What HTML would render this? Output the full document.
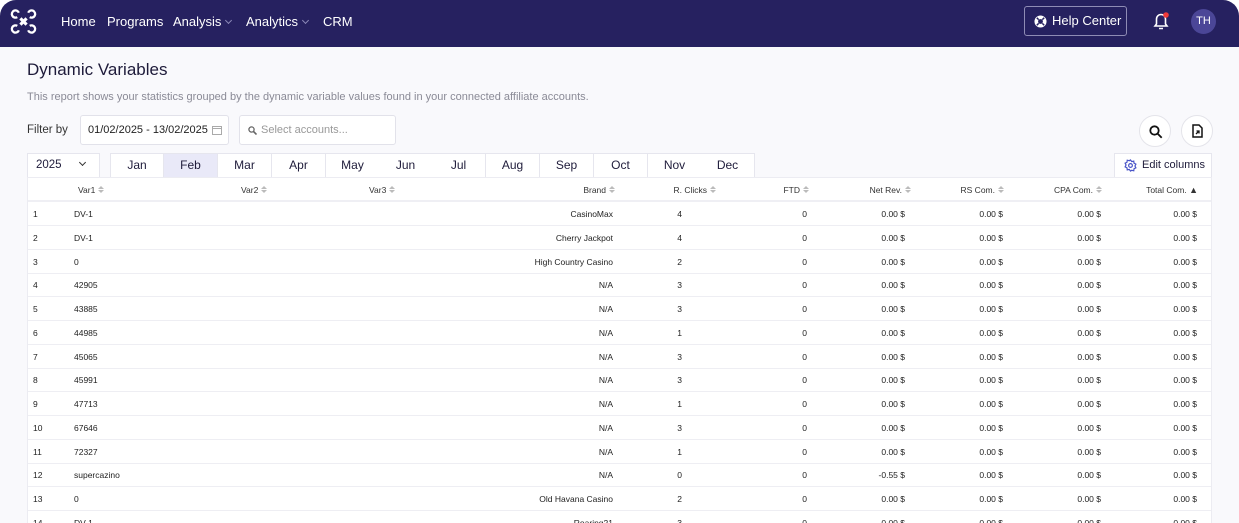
<!DOCTYPE html>
<html><head><meta charset="utf-8"><style>
*{box-sizing:border-box;margin:0;padding:0}
html,body{width:1239px;height:523px;overflow:hidden;background:#fff;font-family:"Liberation Sans",sans-serif;color:#1e1b3a}
.app{position:absolute;left:0;top:0;width:1239px;height:523px;background:#f9f9fc;border-radius:16px 16px 0 0;overflow:hidden}
.nav{position:absolute;left:0;top:0;width:1239px;height:47px;background:#262160}
.nav .l{position:absolute;top:14px;color:#fff;font-size:13px;white-space:nowrap}
.chev{display:inline-block;width:5px;height:5px;border-right:1px solid #8c89b8;border-bottom:1px solid #8c89b8;transform:rotate(45deg);margin-left:5px;position:relative;top:-3px}
.help{position:absolute;left:1024px;top:6px;width:103px;height:30px;border:1px solid #8f8cb5;border-radius:3px;color:#fff;font-size:13px;line-height:28px;padding-left:27px;white-space:nowrap}
.av{position:absolute;left:1191px;top:9px;width:25px;height:25px;border-radius:50%;background:#4b4697;color:#fff;font-size:11px;text-align:center;line-height:25px}
.abs{position:absolute}
.inp{position:absolute;top:115px;height:30px;background:#fff;border:1px solid #e2e2ea;border-radius:3px;font-size:11px;line-height:28px;white-space:nowrap}
.circ{position:absolute;top:115px;width:32px;height:32px;border-radius:50%;border:1px solid #e4e4ea;background:#fff}
.tabs{position:absolute;top:153px;height:25px;background:#fff;border:1px solid #e6e6ee;font-size:12px;white-space:nowrap}
.m{position:absolute;top:153px;height:25px;width:54px;border:1px solid #e6e6ee;border-left:none;background:#fff;font-size:12px;text-align:center;line-height:23px}
.tbl{position:absolute;left:27px;top:177px;width:1185px;height:360px;background:#fff;border:1px solid #ececf2}
.hr{position:absolute;left:0;top:0;width:100%;height:24px;border-bottom:2px solid #efeff4;font-size:8.5px;color:#333}
.r{position:absolute;left:0;width:100%;height:24px;border-bottom:1px solid #eeeef3;font-size:8.5px;color:#222}
.r span,.hr span{position:absolute;top:7px;white-space:nowrap}
.s{display:inline-block;width:6px;height:8px;margin-left:3px;vertical-align:-1px;position:relative}
.s:before{content:"";position:absolute;left:0;top:0;border-left:3px solid transparent;border-right:3px solid transparent;border-bottom:3px solid #bbb}
.s:after{content:"";position:absolute;left:0;top:4px;border-left:3px solid transparent;border-right:3px solid transparent;border-top:3px solid #bbb}
.n{left:5px}.v1{left:46px}
.b{right:598px}.c{right:529px}.f{right:404px}.nr{right:306px}.rs{right:208px}.cp{right:110px}.t{right:14px}
.hr .b{right:596px}.hr .c{right:495px}.hr .f{right:402px}.hr .nr{right:300px}.hr .rs{right:207px}.hr .cp{right:109px}.hr .t{right:13px}
</style></head><body><div class="app">
<div class="nav">
<svg class="abs" style="left:9px;top:7px" width="29" height="29" viewBox="0 0 28 28" fill="none" stroke="#fff" stroke-width="2.2"><path d="M9.5 5.5A3.5 3.5 0 1 0 8 9.8"/><path d="M18.5 5.5A3.5 3.5 0 1 1 20 9.8"/><path d="M9.5 22.5A3.5 3.5 0 1 1 8 18.2"/><path d="M18.5 22.5A3.5 3.5 0 1 0 20 18.2"/><path d="M11 11l6 6M17 11l-6 6" stroke-width="3"/></svg>
<span class="l" style="left:61px">Home</span><span class="l" style="left:107px">Programs</span>
<span class="l" style="left:173px">Analysis<i class="chev"></i></span><span class="l" style="left:246px">Analytics<i class="chev"></i></span><span class="l" style="left:323px">CRM</span>
<div class="help"><svg class="abs" style="left:9px;top:8px" width="13" height="13" viewBox="0 0 14 14"><circle cx="7" cy="7" r="6.5" fill="#fff"/><circle cx="7" cy="7" r="2.6" fill="#262160"/><path d="M3 3l2 2M11 3l-2 2M3 11l2-2M11 11l-2-2" stroke="#262160" stroke-width="1.6"/></svg>Help Center</div>
<svg class="abs" style="left:1152px;top:11px" width="18" height="20" viewBox="0 0 18 20" fill="none" stroke="#fff" stroke-width="1.6"><path d="M3 15h12l-1.5-2V8a4.5 4.5 0 0 0-9 0v5z"/><path d="M7 17.5h4"/><circle cx="14" cy="4" r="2.8" fill="#f03a3a" stroke="none"/></svg>
<div class="av">TH</div>
</div>
<div class="abs" style="left:27px;top:60px;font-size:17px;color:#1e1b3a">Dynamic Variables</div>
<div class="abs" style="left:27px;top:91px;font-size:11px;color:#8a8a96">This report shows your statistics grouped by the dynamic variable values found in your connected affiliate accounts.</div>
<div class="abs" style="left:27px;top:124px;font-size:11.5px;color:#333">Filter by</div>
<div class="inp" style="left:80px;width:149px;padding-left:7px;color:#222">01/02/2025 - 13/02/2025<svg class="abs" style="left:131px;top:9px" width="10" height="10" viewBox="0 0 10 10" fill="none" stroke="#aaa"><rect x=".5" y="1.5" width="9" height="8"/><path d="M.5 3.5h9"/></svg></div>
<div class="inp" style="left:239px;width:157px;padding-left:21px;color:#999"><svg class="abs" style="left:8px;top:10px" width="9" height="9" viewBox="0 0 9 9"><circle cx="3.5" cy="3.5" r="2.6" fill="none" stroke="#666" stroke-width="1.3"/><path d="M5.5 5.5l3 3" stroke="#666" stroke-width="1.6"/></svg>Select accounts...</div>
<div class="circ" style="left:1139px"><svg class="abs" style="left:9px;top:9px" width="14" height="14" viewBox="0 0 14 14" fill="none" stroke="#111" stroke-width="1.8"><circle cx="5.5" cy="5.5" r="4.2"/><path d="M8.7 8.7l4 4"/></svg></div>
<div class="circ" style="left:1181px"><svg class="abs" style="left:10px;top:8px" width="11" height="14" viewBox="0 0 11 14"><path d="M1 1h6l3 3v9H1z" fill="none" stroke="#111" stroke-width="1.5"/><path d="M4 10l3-3M4.5 7H7v2.5" stroke="#111" stroke-width="1.3" fill="none"/></svg></div>
<div class="tabs" style="left:27px;width:73px;padding-left:8px;line-height:23px;font-size:11.5px">2025<i class="chev" style="margin-left:18px;border-color:#333"></i></div>
<div class="m" style="left:110px;border-left:1px solid #e6e6ee">Jan</div>
<div class="m" style="left:164px;background:#e9e9f8">Feb</div><div class="m" style="left:218px">Mar</div><div class="m" style="left:272px">Apr</div><div class="m" style="left:326px">May</div><div class="m" style="left:379px">Jun</div><div class="m" style="left:432px">Jul</div><div class="m" style="left:486px">Aug</div><div class="m" style="left:540px">Sep</div><div class="m" style="left:594px">Oct</div><div class="m" style="left:648px">Nov</div><div class="m" style="left:701px">Dec</div>
<div class="tabs" style="left:1114px;width:98px;padding-left:27px;line-height:23px;font-size:11px">Edit columns<svg class="abs" style="left:9px;top:5px" width="13" height="13" viewBox="0 0 14 14" fill="none" stroke="#4a55c8" stroke-width="1.3"><circle cx="7" cy="7" r="2"/><path d="M7 1l1.3 1.8 2.2-.5.3 2.2 2 1-1 2 1 2-2 1-.3 2.2-2.2-.5L7 13l-1.3-1.8-2.2.5-.3-2.2-2-1 1-2-1-2 2-1 .3-2.2 2.2.5z"/></svg></div>
<div class="tbl">
<div class="hr"><span style="left:50px">Var1<i class="s"></i></span><span style="left:213px">Var2<i class="s"></i></span><span style="left:341px">Var3<i class="s"></i></span><span class="b">Brand<i class="s"></i></span><span class="c">R. Clicks<i class="s"></i></span><span class="f">FTD<i class="s"></i></span><span class="nr">Net Rev.<i class="s"></i></span><span class="rs">RS Com.<i class="s"></i></span><span class="cp">CPA Com.<i class="s"></i></span><span class="t">Total Com. <b style="font-size:9px">▲</b></span></div>
<div class="r" style="top:24px"><span class="n">1</span><span class="v1">DV-1</span><span class="b">CasinoMax</span><span class="c">4</span><span class="f">0</span><span class="nr">0.00 $</span><span class="rs">0.00 $</span><span class="cp">0.00 $</span><span class="t">0.00 $</span></div>
<div class="r" style="top:48px"><span class="n">2</span><span class="v1">DV-1</span><span class="b">Cherry Jackpot</span><span class="c">4</span><span class="f">0</span><span class="nr">0.00 $</span><span class="rs">0.00 $</span><span class="cp">0.00 $</span><span class="t">0.00 $</span></div>
<div class="r" style="top:72px"><span class="n">3</span><span class="v1">0</span><span class="b">High Country Casino</span><span class="c">2</span><span class="f">0</span><span class="nr">0.00 $</span><span class="rs">0.00 $</span><span class="cp">0.00 $</span><span class="t">0.00 $</span></div>
<div class="r" style="top:95px"><span class="n">4</span><span class="v1">42905</span><span class="b">N/A</span><span class="c">3</span><span class="f">0</span><span class="nr">0.00 $</span><span class="rs">0.00 $</span><span class="cp">0.00 $</span><span class="t">0.00 $</span></div>
<div class="r" style="top:119px"><span class="n">5</span><span class="v1">43885</span><span class="b">N/A</span><span class="c">3</span><span class="f">0</span><span class="nr">0.00 $</span><span class="rs">0.00 $</span><span class="cp">0.00 $</span><span class="t">0.00 $</span></div>
<div class="r" style="top:143px"><span class="n">6</span><span class="v1">44985</span><span class="b">N/A</span><span class="c">1</span><span class="f">0</span><span class="nr">0.00 $</span><span class="rs">0.00 $</span><span class="cp">0.00 $</span><span class="t">0.00 $</span></div>
<div class="r" style="top:167px"><span class="n">7</span><span class="v1">45065</span><span class="b">N/A</span><span class="c">3</span><span class="f">0</span><span class="nr">0.00 $</span><span class="rs">0.00 $</span><span class="cp">0.00 $</span><span class="t">0.00 $</span></div>
<div class="r" style="top:190px"><span class="n">8</span><span class="v1">45991</span><span class="b">N/A</span><span class="c">3</span><span class="f">0</span><span class="nr">0.00 $</span><span class="rs">0.00 $</span><span class="cp">0.00 $</span><span class="t">0.00 $</span></div>
<div class="r" style="top:214px"><span class="n">9</span><span class="v1">47713</span><span class="b">N/A</span><span class="c">1</span><span class="f">0</span><span class="nr">0.00 $</span><span class="rs">0.00 $</span><span class="cp">0.00 $</span><span class="t">0.00 $</span></div>
<div class="r" style="top:238px"><span class="n">10</span><span class="v1">67646</span><span class="b">N/A</span><span class="c">3</span><span class="f">0</span><span class="nr">0.00 $</span><span class="rs">0.00 $</span><span class="cp">0.00 $</span><span class="t">0.00 $</span></div>
<div class="r" style="top:262px"><span class="n">11</span><span class="v1">72327</span><span class="b">N/A</span><span class="c">1</span><span class="f">0</span><span class="nr">0.00 $</span><span class="rs">0.00 $</span><span class="cp">0.00 $</span><span class="t">0.00 $</span></div>
<div class="r" style="top:285px"><span class="n">12</span><span class="v1">supercazino</span><span class="b">N/A</span><span class="c">0</span><span class="f">0</span><span class="nr">-0.55 $</span><span class="rs">0.00 $</span><span class="cp">0.00 $</span><span class="t">0.00 $</span></div>
<div class="r" style="top:309px"><span class="n">13</span><span class="v1">0</span><span class="b">Old Havana Casino</span><span class="c">2</span><span class="f">0</span><span class="nr">0.00 $</span><span class="rs">0.00 $</span><span class="cp">0.00 $</span><span class="t">0.00 $</span></div>
<div class="r" style="top:333px"><span class="n">14</span><span class="v1">DV-1</span><span class="b">Roaring21</span><span class="c">3</span><span class="f">0</span><span class="nr">0.00 $</span><span class="rs">0.00 $</span><span class="cp">0.00 $</span><span class="t">0.00 $</span></div>
</div>
</div></body></html>
